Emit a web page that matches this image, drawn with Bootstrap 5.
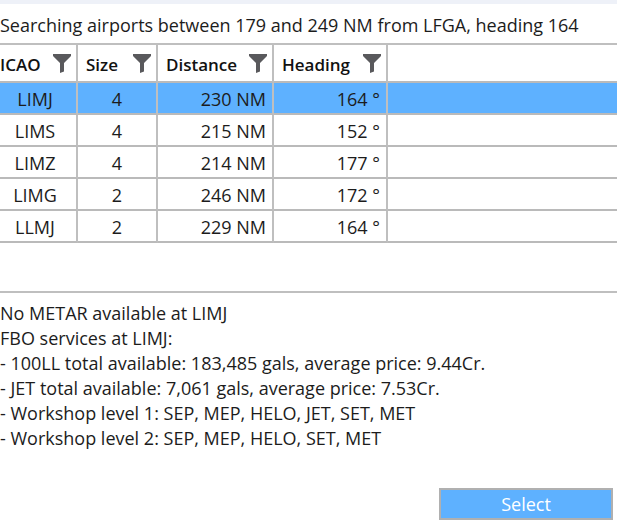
<!DOCTYPE html>
<html lang="en">
<head>
<meta charset="utf-8">
<meta name="viewport" content="width=device-width, initial-scale=1">
<title>Airport search</title>
<link href="https://cdn.jsdelivr.net/npm/bootstrap@5.3.0/dist/css/bootstrap.min.css" rel="stylesheet">
<style>
  body { font-family: "Segoe UI", "Open Sans", sans-serif; font-size: 18px; line-height: 25px; color: #1c1c1c; background: #fff; }
  .window-edge { height: 4px; background: #eef1f8; }
  .summary { padding-top: 3px; line-height: 36px; }
  .results { border-top: 2px solid #bfbfbf; border-bottom: 2px solid #bfbfbf; min-height: 250px; }
  .airport-grid { table-layout: fixed; border-collapse: separate; border-spacing: 0; color: inherit; }
  .airport-grid th, .airport-grid td { border-right: 2px solid #bfbfbf; border-bottom: 2px solid #bababa; padding: 0 6px; line-height: 30px; white-space: nowrap; }
  .airport-grid th { height: 38px; font-size: 17px; font-weight: 600; color: #111; padding: 4px 5px 0 8px; }
  .airport-grid th:first-child, .airport-grid td:first-child { padding-left: 0; }
  .airport-grid td { padding-top: 2px; line-height: 28px; }
  .airport-grid .filler { border-right: 0; }
  .airport-grid .picked td { background: #5eb1ff; }
  .col-icao { width: 78px; }
  .col-size { width: 80px; }
  .col-dist { width: 116px; }
  .col-head { width: 114px; }
  .filter-btn { line-height: 1; color: #59595c; }
  .actions { padding-top: 37px; }
  .select-btn { width: 174px; height: 32px; line-height: 28px; font-size: inherit; background: #5eb1ff; border: 2px solid #b0b0b0; color: #fff; }
</style>
<script src="https://cdn.jsdelivr.net/npm/bootstrap@5.3.0/dist/js/bootstrap.bundle.min.js"></script>
</head>
<body>
<svg class="d-none" aria-hidden="true">
  <symbol id="funnel" viewBox="0 0 18 19"><path fill="currentColor" d="M0 0h18v2l-7 7v8.500l-4 1.500V9L0 2z"/></symbol>
</svg>
<div class="window-edge"></div>
<main>
  <p class="summary m-0 text-nowrap">Searching airports between 179 and 249 NM from LFGA, heading 164</p>
  <div class="results">
    <table class="airport-grid w-100">
      <colgroup><col class="col-icao"><col class="col-size"><col class="col-dist"><col class="col-head"><col></colgroup>
      <thead>
        <tr>
          <th scope="col"><div class="d-flex justify-content-between align-items-center">ICAO<button type="button" class="filter-btn btn border-0 p-0 mb-1" aria-label="Filter by ICAO"><svg class="d-block" width="18" height="19"><use href="#funnel"/></svg></button></div></th>
          <th scope="col"><div class="d-flex justify-content-between align-items-center">Size<button type="button" class="filter-btn btn border-0 p-0 mb-1" aria-label="Filter by size"><svg class="d-block" width="18" height="19"><use href="#funnel"/></svg></button></div></th>
          <th scope="col"><div class="d-flex justify-content-between align-items-center">Distance<button type="button" class="filter-btn btn border-0 p-0 mb-1" aria-label="Filter by distance"><svg class="d-block" width="18" height="19"><use href="#funnel"/></svg></button></div></th>
          <th scope="col"><div class="d-flex justify-content-between align-items-center">Heading<button type="button" class="filter-btn btn border-0 p-0 mb-1" aria-label="Filter by heading"><svg class="d-block" width="18" height="19"><use href="#funnel"/></svg></button></div></th>
          <td class="filler"></td>
        </tr>
      </thead>
      <tbody>
        <tr class="picked"><td class="text-center">LIMJ</td><td class="text-center">4</td><td class="text-end">230 NM</td><td class="text-end">164 °</td><td class="filler"></td></tr>
        <tr><td class="text-center">LIMS</td><td class="text-center">4</td><td class="text-end">215 NM</td><td class="text-end">152 °</td><td class="filler"></td></tr>
        <tr><td class="text-center">LIMZ</td><td class="text-center">4</td><td class="text-end">214 NM</td><td class="text-end">177 °</td><td class="filler"></td></tr>
        <tr><td class="text-center">LIMG</td><td class="text-center">2</td><td class="text-end">246 NM</td><td class="text-end">172 °</td><td class="filler"></td></tr>
        <tr><td class="text-center">LLMJ</td><td class="text-center">2</td><td class="text-end">229 NM</td><td class="text-end">164 °</td><td class="filler"></td></tr>
      </tbody>
    </table>
  </div>
  <div class="pt-2 text-nowrap">
    <div>No METAR available at LIMJ</div>
    <div>FBO services at LIMJ:</div>
    <div>- 100LL total available: 183,485 gals, average price: 9.44Cr.</div>
    <div>- JET total available: 7,061 gals, average price: 7.53Cr.</div>
    <div>- Workshop level 1: SEP, MEP, HELO, JET, SET, MET</div>
    <div>- Workshop level 2: SEP, MEP, HELO, SET, MET</div>
  </div>
  <div class="actions d-flex justify-content-end pe-1">
    <button type="button" class="select-btn btn rounded-0 p-0">Select</button>
  </div>
</main>
</body>
</html>
